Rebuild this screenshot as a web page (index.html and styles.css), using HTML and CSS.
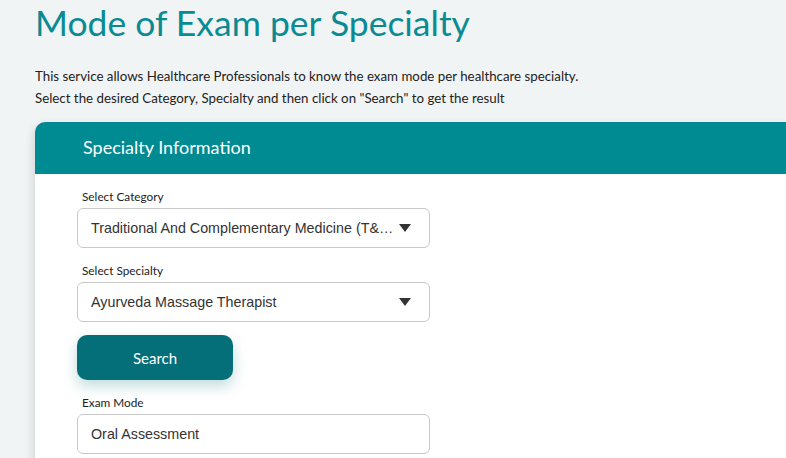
FILE: index.html
```html
<!DOCTYPE html>
<html lang="en">
<head>
<meta charset="utf-8">
<title>Mode of Exam per Specialty</title>
<link rel="stylesheet" href="styles.css">
</head>
<body>
<main class="page">
  <h1 class="title">Mode of Exam per Specialty</h1>
  <p class="intro">This service allows Healthcare Professionals to know the exam mode per healthcare specialty.<br>Select the desired Category, Specialty and then click on "Search" to get the result</p>
  <section class="card">
    <header class="card-head">Specialty Information</header>
    <div class="card-body">
      <div class="field">
        <label class="label">Select Category</label>
        <div class="select">
          <span class="select-text">Traditional And Complementary Medicine (T&amp;…</span>
          <span class="caret"></span>
        </div>
      </div>
      <div class="field">
        <label class="label">Select Specialty</label>
        <div class="select">
          <span class="select-text">Ayurveda Massage Therapist</span>
          <span class="caret"></span>
        </div>
      </div>
      <button class="btn">Search</button>
      <div class="field">
        <label class="label">Exam Mode</label>
        <div class="select">
          <span class="select-text">Oral Assessment</span>
        </div>
      </div>
    </div>
  </section>
</main>
</body>
</html>
```
FILE: styles.css
```css
html, body {
  margin: 0;
  padding: 0;
  background: #f1f4f5;
  overflow: hidden;
  height: 458px;
}
.page {
  padding-left: 35px;
  font-family: "Lato", "Open Sans", sans-serif;
}
.title {
  margin: 0;
  padding-top: 1px;
  font-size: 35.5px;
  font-weight: 400;
  color: #0a8b94;
  line-height: 44px;
}
.intro {
  margin: 20px 0 13px;
  font-size: 13.3px;
  line-height: 22px;
  color: #222;
}
.card {
  width: 820px;
  background: #fff;
  border-top-left-radius: 10px;
  box-shadow: -2px 4px 10px rgba(0,0,0,0.12);
  overflow: hidden;
}
.card-head {
  height: 52px;
  background: #008b92;
  color: #fff;
  font-size: 18px;
  line-height: 51px;
  padding-left: 48px;
}
.card-body {
  padding: 15px 0 20px 42px;
  display: flex;
  flex-direction: column;
  align-items: flex-start;
}
.field {
  display: flex;
  flex-direction: column;
}
.field + .field {
  margin-top: 15px;
}
.label {
  font-size: 11.8px;
  line-height: 15px;
  color: #222;
  margin-bottom: 4px;
  padding-left: 5px;
}
.select {
  box-sizing: border-box;
  width: 353px;
  height: 40px;
  border: 1px solid #c9c9c9;
  border-radius: 6px;
  display: flex;
  align-items: center;
  justify-content: space-between;
  padding: 0 18px 0 13px;
  font-family: "Liberation Sans", Arial, sans-serif;
  font-size: 14.3px;
  color: #333;
  background: #fff;
}
.caret {
  width: 0;
  height: 0;
  border-left: 6px solid transparent;
  border-right: 6px solid transparent;
  border-top: 8px solid #333;
}
.btn {
  margin: 13px 0 15px;
  width: 156px;
  height: 45px;
  border: none;
  border-radius: 10px;
  background: #046f79;
  color: #fff;
  font-family: "Lato", sans-serif;
  font-size: 15px;
  box-shadow: 0 6px 14px rgba(4,111,121,0.25);
}
```
